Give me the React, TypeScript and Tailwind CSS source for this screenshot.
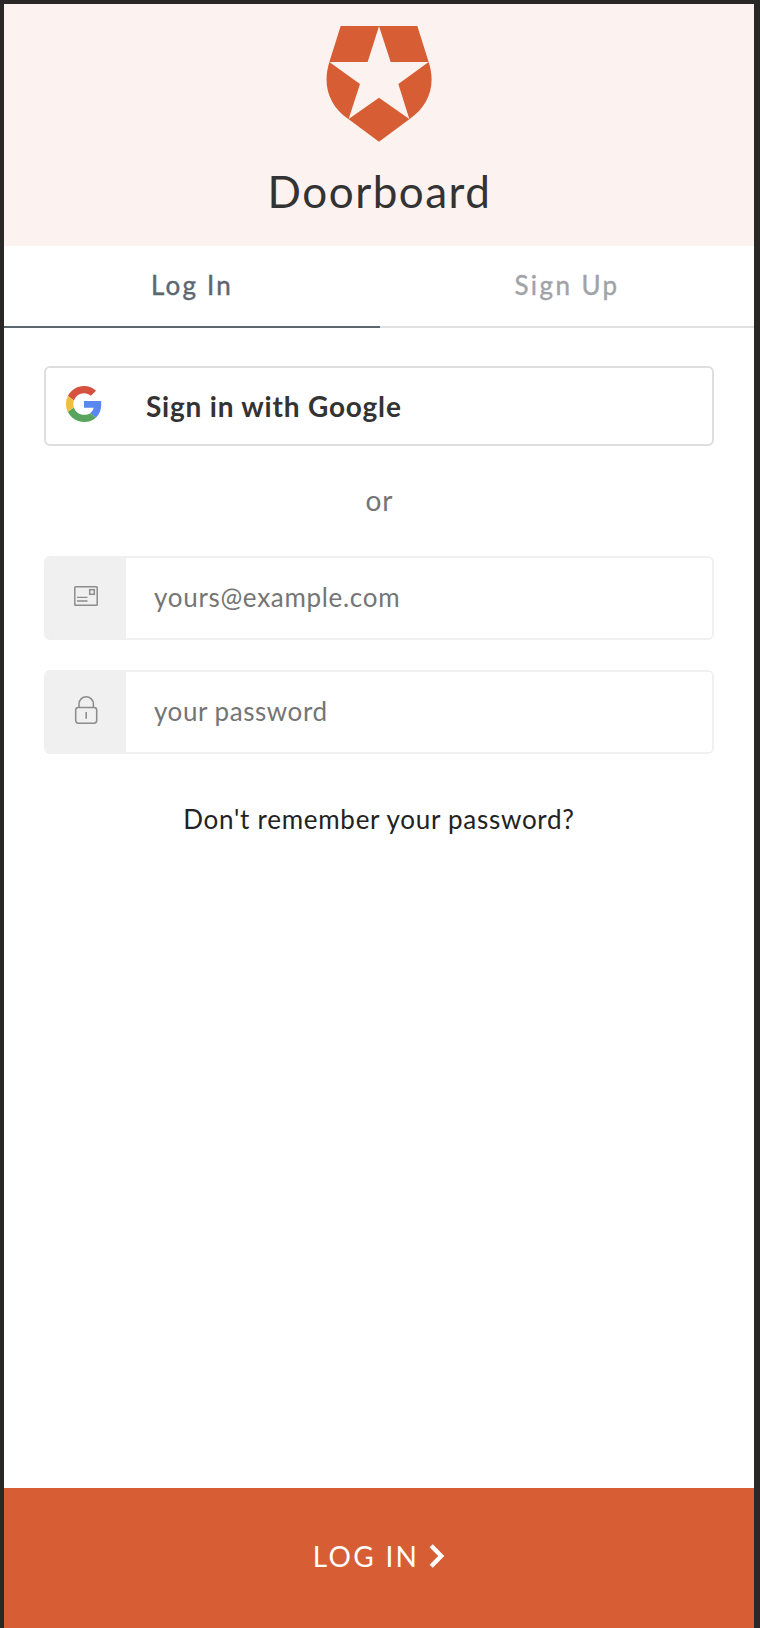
import React from "react";

function ShieldLogo() {
  return (
    <svg className="h-[116px] w-[106px]" viewBox="258 78 318 348" aria-hidden="true">
      <path
        fillRule="evenodd"
        fill="#d75e34"
        d="M302 78H532L566 186C589 257 566 318 508 358L417 425L326 358C268 318 246 257 268 186ZM417 79L383 186H268L360 252L326 357L417 293L508 357L475 252L566 186H452Z"
      />
    </svg>
  );
}

function GoogleLogo() {
  return (
    <svg className="h-9 w-9" viewBox="0 0 48 48" aria-hidden="true">
      <path fill="#d65240" d="M24 9.5c3.54 0 6.71 1.22 9.21 3.6l6.85-6.85C35.9 2.38 30.47 0 24 0 14.62 0 6.51 5.38 2.56 13.22l7.98 6.19C12.43 13.72 17.74 9.5 24 9.5z" />
      <path fill="#5787ef" d="M46.98 24.55c0-1.57-.15-3.09-.38-4.55H24v9.02h12.94c-.58 2.96-2.26 5.48-4.78 7.18l7.73 6c4.51-4.18 7.09-10.36 7.09-17.65z" />
      <path fill="#f0be42" d="M10.53 28.59c-.48-1.45-.76-2.99-.76-4.59s.27-3.14.76-4.59l-7.98-6.19C.92 16.46 0 20.12 0 24c0 3.88.92 7.54 2.56 10.78l7.97-6.19z" />
      <path fill="#59a55d" d="M24 48c6.48 0 11.93-2.13 15.89-5.81l-7.73-6c-2.15 1.45-4.92 2.3-8.16 2.3-6.26 0-11.57-4.22-13.47-9.91l-7.98 6.19C6.51 42.62 14.62 48 24 48z" />
    </svg>
  );
}

function MailIcon() {
  return (
    <svg className="h-5 w-6" viewBox="0 0 24 20" fill="none" stroke="#8c8c8c" aria-hidden="true">
      <rect x="0.8" y="0.8" width="22.4" height="18.4" rx="0.8" strokeWidth="1.5" />
      <rect x="15.7" y="3.7" width="4.6" height="4.6" strokeWidth="1.5" />
      <path d="M3 11.4H13.5M3 15H13.5" strokeWidth="1.4" />
    </svg>
  );
}

function LockIcon() {
  return (
    <svg className="h-7 w-6" viewBox="0 0 24 28" fill="none" stroke="#8c8c8c" strokeWidth="1.55" aria-hidden="true">
      <rect x="1.7" y="11.4" width="21" height="15.8" rx="2.6" />
      <path d="M5 11.3V8A7.2 7.2 0 0 1 19.4 8V11.3M12.2 16V22.7" />
    </svg>
  );
}

function Field({ icon, type, placeholder, spacing }: { icon: React.ReactNode; type: string; placeholder: string; spacing: string }) {
  return (
    <div className="flex h-[84px] overflow-hidden rounded-md border-2 border-[#f0f0f0]">
      <div className="flex w-20 shrink-0 items-center justify-center bg-[#f0f0f0] pb-1">{icon}</div>
      <input
        type={type}
        placeholder={placeholder}
        className={`min-w-0 flex-1 bg-white pb-0.5 pl-7 text-[26px] text-[#757575] outline-none placeholder:text-[#757575] ${spacing}`}
      />
    </div>
  );
}

export default function App() {
  return (
    <div className="h-[1628px] w-[760px] bg-[#292826] pt-1 pr-1.5 pl-1 font-['Lato',sans-serif]">
      <main className="flex h-full flex-col bg-white">
        <header className="flex h-[242px] shrink-0 flex-col items-center bg-[#fcf2ef] pt-[22px]">
          <ShieldLogo />
          <h1 className="mt-[21px] pl-px text-[44px] leading-[56px] tracking-[1.5px] text-[#333]">Doorboard</h1>
        </header>

        <nav className="flex h-[82px] shrink-0 text-[26px] leading-10">
          <button className="flex w-[376px] justify-center border-b-2 border-[#5c666f] pt-[19px] tracking-[2.2px] text-[#5c666f] [-webkit-text-stroke:0.4px_currentColor]">Log In</button>
          <button className="flex flex-1 justify-center border-b-2 border-[#dfe0e2] pt-[19px] tracking-[2.4px] text-[#9fa3a8] [-webkit-text-stroke:0.4px_currentColor]">Sign Up</button>
        </nav>

        <form className="flex flex-1 flex-col">
          <div className="flex flex-1 flex-col px-10 pt-[38px]">
            <button type="button" className="flex h-20 items-center rounded-md border-2 border-[#dedede] pl-5">
              <span className="pb-1"><GoogleLogo /></span>
              <span className="ml-11 text-[28px] font-bold tracking-[0.8px] text-[#333]">Sign in with Google</span>
            </button>
            <p className="mt-[34px] pl-px text-center text-[28px] leading-10 tracking-[1px] text-[#757575]">or</p>
            <div className="mt-9 flex flex-col gap-[30px]">
              <Field icon={<MailIcon />} type="email" placeholder="yours@example.com" spacing="tracking-[0.7px]" />
              <Field icon={<LockIcon />} type="password" placeholder="your password" spacing="tracking-[0.55px]" />
            </div>
            <a className="mt-[45px] text-center text-[26px] leading-10 tracking-[0.73px] text-[#222]">Don't remember your password?</a>
          </div>
          <button type="button" className="flex h-[140px] items-center justify-center gap-2.5 bg-[#d75e34] pb-[5px] text-[28px] text-white">
            <span className="tracking-[2.3px]">LOG IN</span>
            <svg className="h-6 w-4" viewBox="0 0 16 24" fill="none" stroke="white" strokeWidth="4.4" aria-hidden="true">
              <path d="M2.2 1.8L12.2 12L2.2 22.2" />
            </svg>
          </button>
        </form>
      </main>
    </div>
  );
}
